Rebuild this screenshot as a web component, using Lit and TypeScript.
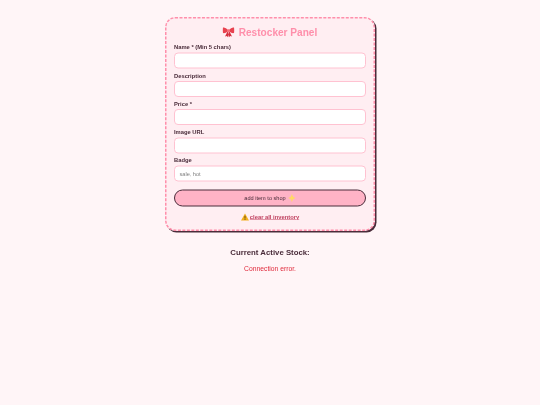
import { LitElement, html, css } from "lit";
import { customElement } from "lit/decorators.js";

@customElement("app-root")
export class AppRoot extends LitElement {
  static styles = css`
    :host {
      display: block;
      height: 405px;
      overflow: hidden;
      background: #fff5f7;
      font-family: "Liberation Sans", Arial, sans-serif;
      color: #4a2c3a;
    }
    .page {
      box-sizing: border-box;
      width: 1080px;
      height: 810px;
      padding-top: 34px;
      transform: scale(0.5);
      transform-origin: 0 0;
      filter: blur(0.7px);
    }
    .card {
      box-sizing: border-box;
      width: 420px;
      height: 428px;
      margin: 0 auto;
      padding: 13px 15px 0;
      background: #ffeef2;
      border: 3px dashed #ff8fab;
      border-radius: 20px;
      box-shadow: 3px 3px 0 #4a2c3a;
    }
    h2 {
      margin: 0 0 9px;
      height: 28px;
      display: flex;
      align-items: center;
      justify-content: center;
      gap: 8px;
      font-size: 20.2px;
      line-height: 28px;
      font-weight: 700;
      color: #ff8fab;
    }
    .field {
      margin-bottom: 6.5px;
    }
    label {
      display: block;
      font-size: 11.6px;
      line-height: 14px;
      font-weight: 700;
      margin-bottom: 4px;
      color: #4a2c3a;
    }
    input {
      display: block;
      box-sizing: border-box;
      width: 100%;
      height: 32px;
      padding: 0 9px;
      background: #fff;
      border: 2px solid #ffc2d1;
      border-radius: 8px;
      font: 11.2px "Liberation Sans", Arial, sans-serif;
      outline: none;
    }
    input::placeholder {
      color: #808080;
    }
    button {
      display: flex;
      align-items: center;
      justify-content: center;
      gap: 4px;
      box-sizing: border-box;
      width: 100%;
      height: 34px;
      margin-top: 16px;
      padding: 0;
      background: #ffb3c6;
      border: 2px solid #4a2c3a;
      border-radius: 18px;
      font: 11.2px "Liberation Sans", Arial, sans-serif;
      color: #4a2c3a;
    }
    .clear {
      display: flex;
      justify-content: center;
      align-items: center;
      gap: 2px;
      margin-top: 13px;
      font-size: 11.6px;
      line-height: 14px;
      font-weight: 700;
      color: #c0405f;
    }
    .clear span {
      text-decoration: underline;
    }
    h3 {
      margin: 31px 0 0;
      text-align: center;
      font-size: 15.6px;
      line-height: 22px;
      font-weight: 700;
      color: #4a2c3a;
    }
    .err {
      margin: 13px 0 0;
      text-align: center;
      font-size: 13.5px;
      line-height: 18px;
      color: #e02a3c;
    }
    svg {
      display: block;
      flex: none;
    }
  `;

  private field(label: string, placeholder = "") {
    return html`<div class="field">
      <label>${label}</label>
      <input placeholder=${placeholder} />
    </div>`;
  }

  render() {
    return html`
      <div class="page">
        <div class="card">
          <h2>
            <svg width="24" height="22" viewBox="0 0 24 22">
              <path d="M12 8C8 3 3 1 1 2c-1 3-1 8 0 11 3 1 8-1 11-5z" fill="#e8424f" />
              <path d="M12 8c4-5 9-7 11-6 1 3 1 8 0 11-3 1-8-1-11-5z" fill="#e8424f" />
              <path d="M10 10 5 20l4-1 2 3 2-12zM14 10l5 10-4-1-2 3-2-12z" fill="#d42f3e" />
              <rect x="9.5" y="5.5" width="5" height="6" rx="2" fill="#f7707a" />
            </svg>
            Restocker Panel
          </h2>
          ${this.field("Name * (Min 5 chars)")}
          ${this.field("Description")}
          ${this.field("Price *")}
          ${this.field("Image URL")}
          ${this.field("Badge", "sale, hot")}
          <button>
            add item to shop
            <svg width="16" height="16" viewBox="0 0 10 10">
              <path d="M5.5 0 7 3.5 10 5 7 6.5 5.5 10 4 6.5 1 5 4 3.5z" fill="#ffd866" />
            </svg>
          </button>
          <div class="clear">
            <svg width="16" height="16" viewBox="0 0 10 10">
              <path d="M5 .5 10 9.5H0z" fill="#f2b01e" />
              <rect x="4.5" y="3.5" width="1" height="3.5" fill="#4a3410" />
              <rect x="4.5" y="7.6" width="1" height="1" fill="#4a3410" />
            </svg>
            <span>clear all inventory</span>
          </div>
        </div>
        <h3>Current Active Stock:</h3>
        <p class="err">Connection error.</p>
      </div>
    `;
  }
}
